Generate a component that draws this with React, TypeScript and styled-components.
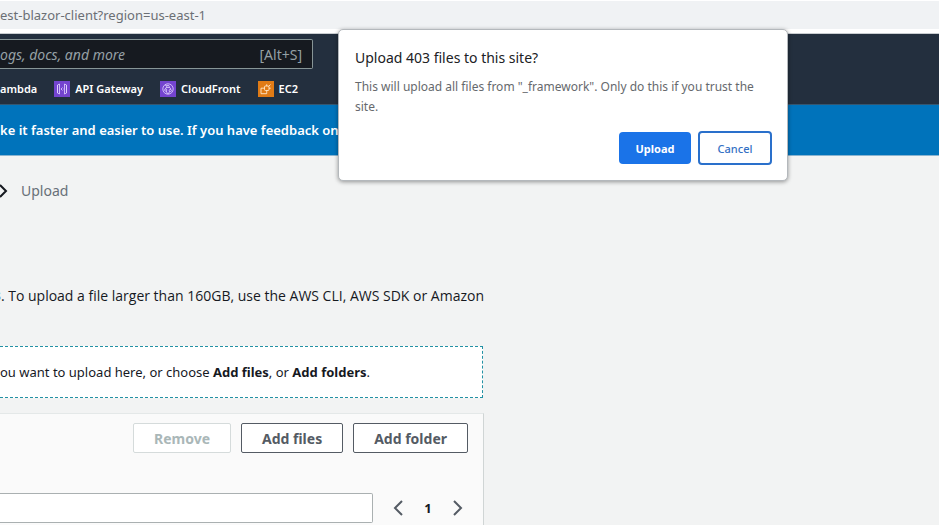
import React from "react";
import styled, { createGlobalStyle } from "styled-components";

const Global = createGlobalStyle`
  *, *::before, *::after { box-sizing: border-box; }
  html, body { margin: 0; }
  body { background: #f2f3f3; font-family: "Noto Sans", "Open Sans", sans-serif; color: #16191f; overflow: hidden; }
  p, h2 { margin: 0; }
  button, input { font-family: inherit; }
`;

const Page = styled.div`
  min-height: 100vh;
  display: flex;
  flex-direction: column;
`;

const AddressBar = styled.div`
  border-top: 1px solid #fff;
  border-bottom: 4px solid #fff;
  background: #f0f2f4;
  color: #6b6f74;
  font-size: 13px;
  line-height: 28px;
  white-space: nowrap;
`;

const Header = styled.header`
  background: #232f3e;
  border-top: 1px solid #c9cdd1;
  padding-top: 5px;
`;

const SearchBox = styled.label`
  display: flex;
  align-items: center;
  width: 313px;
  height: 30px;
  padding-right: 10px;
  background: #161a20;
  border: 1px solid #879596;
  border-left: 0;
  border-radius: 0 2px 2px 0;
  color: #95a0a5;
  font-size: 14px;
`;

const SearchInput = styled.input`
  flex: 1;
  min-width: 0;
  padding: 0;
  border: 0;
  outline: 0;
  background: transparent;
  font-size: 14px;
  font-style: italic;
  &::placeholder { color: #95a0a5; opacity: 1; }
`;

const Favorites = styled.nav`
  display: flex;
  align-items: center;
  gap: 17px;
  height: 35px;
  padding-top: 4px;
  white-space: nowrap;
`;

const Favorite = styled.a`
  display: flex;
  align-items: center;
  gap: 5px;
  color: #fff;
  font-size: 11px;
  font-weight: 600;
  text-decoration: none;
  svg { display: block; flex: none; }
`;

const Notice = styled.div`
  background: #0073bb;
  border-top: 1px solid #35566f;
  border-bottom: 1px solid #8ab4d0;
  color: #fff;
  font-size: 13px;
  font-weight: 600;
  line-height: 50px;
  white-space: nowrap;
`;

const Breadcrumb = styled.nav`
  display: flex;
  align-items: center;
  gap: 12px;
  padding-top: 24px;
  line-height: 22px;
  font-size: 14px;
  color: #687078;
  svg { display: block; }
`;

const Main = styled.main`
  width: 484px;
  max-width: 100%;
  flex: 1;
  display: flex;
  flex-direction: column;
`;

const Intro = styled.p`
  display: flex;
  justify-content: flex-end;
  padding-top: 83px;
  font-family: "Open Sans", sans-serif;
  font-size: 14px;
  line-height: 22px;
  white-space: nowrap;
`;

const DropZone = styled.div`
  margin: 39px 1px 0 0;
  background: #fff;
  border: 1px dashed #2391a4;
  border-left: 0;
  font-size: 13px;
  line-height: 50px;
  white-space: nowrap;
`;

const Panel = styled.section`
  margin-top: 15px;
  padding: 9px 15px 2px 0;
  background: #fafafa;
  border-top: 1px solid #e4e8e8;
  border-right: 1px solid #d0d5d5;
  flex: 1;
`;

const Actions = styled.div`
  display: flex;
  justify-content: flex-end;
  gap: 10px;
`;

const ActionButton = styled.button`
  height: 30px;
  padding: 0 20px;
  background: #fff;
  border: 1px solid #545b64;
  border-radius: 2px;
  color: #545b64;
  font-size: 14px;
  font-weight: 700;
  white-space: nowrap;
  &:disabled { color: #aab7b8; border-color: #d5dbdb; }
`;

const FindRow = styled.div`
  display: flex;
  align-items: center;
  gap: 20px;
  margin-top: 40px;
`;

const FindInput = styled.input`
  flex: 1;
  min-width: 0;
  height: 30px;
  background: #fff;
  border: 1px solid #aab0b1;
  border-left: 0;
  border-radius: 0 2px 2px 0;
  outline: 0;
`;

const Pager = styled.div`
  display: flex;
  align-items: center;
  justify-content: space-between;
  width: 75px;
  padding-right: 5px;
  font-size: 13px;
  font-weight: 700;
`;

const PagerButton = styled.button`
  padding: 0;
  border: 0;
  background: none;
  svg { display: block; }
`;

const Dialog = styled.div`
  position: absolute;
  top: 29px;
  left: 338px;
  width: 450px;
  padding: 16px 15px 15px 16px;
  background: #fff;
  border: 1px solid #b4b8bc;
  border-radius: 5px;
  box-shadow: 0 1px 4px rgba(0, 0, 0, 0.4);
`;

const DialogTitle = styled.h2`
  color: #202124;
  font-size: 14px;
  font-weight: 400;
  line-height: 24px;
`;

const DialogText = styled.p`
  margin-top: 7px;
  color: #66696d;
  font-size: 12px;
  line-height: 20px;
`;

const DialogActions = styled.div`
  display: flex;
  justify-content: flex-end;
  align-items: center;
  gap: 7px;
  margin-top: 14px;
`;

const DialogButton = styled.button<{ $primary?: boolean }>`
  width: ${(p) => (p.$primary ? 72 : 74)}px;
  height: ${(p) => (p.$primary ? 32 : 34)}px;
  padding: 0;
  border: ${(p) => (p.$primary ? "0" : "2px solid #2a70cb")};
  border-radius: 4px;
  background: ${(p) => (p.$primary ? "#1a73e8" : "#fff")};
  color: ${(p) => (p.$primary ? "#fff" : "#3470c4")};
  font-size: 11px;
  font-weight: ${(p) => (p.$primary ? 700 : 500)};
`;

const ApiIcon = () => (
  <svg width="16" height="16" viewBox="0 0 16 16" fill="none" stroke="#e3d5ff" strokeWidth="0.8">
    <rect width="16" height="16" fill="#7444cf" stroke="none" />
    <path d="M3.500 4 5.500 3v10l-2-1zM12.500 4 10.500 3v10l2-1zM3.500 4v8M12.500 4v8M8.500 6.500 7 8l1.500 1.500M9.200 8h.6" />
  </svg>
);

const CloudFrontIcon = () => (
  <svg width="16" height="16" viewBox="0 0 16 16" fill="none" stroke="#e3d5ff" strokeWidth="0.8">
    <rect width="16" height="16" fill="#7444cf" stroke="none" />
    <circle cx="8" cy="8" r="5.200" />
    <circle cx="8" cy="5.500" r="1.200" />
    <circle cx="5.700" cy="9" r="1.100" />
    <circle cx="10.300" cy="9.500" r="1.100" />
    <path d="M7 6.200Q5.500 6.500 5.500 7.900M9 6.200Q11 7 10.500 8.400M6.300 10 7.500 13M5 4l2 1M9.500 10.300 8.500 13" />
  </svg>
);

const Ec2Icon = () => (
  <svg width="16" height="16" viewBox="0 0 16 16" fill="none" stroke="#ffe9cc" strokeWidth="0.9">
    <rect width="16" height="16" fill="#e07b16" stroke="none" />
    <rect x="6.500" y="5" width="4.500" height="4.500" rx="1" />
    <path d="M8.700 3.300V5M11 7.200h1.700M8.700 9.500v1.700M6.500 7.200H3v5.500h5.700v-1.500M10.700 5.300 12.500 3.500" />
  </svg>
);

const Chevron = ({ right }: { right?: boolean }) => (
  <svg width="10" height="16" viewBox="0 0 10 16" fill="none" stroke="#545b64" strokeWidth="2">
    <path d={right ? "M1 1l7 7-7 7" : "M9 1L2 8l7 7"} />
  </svg>
);

export default function App() {
  return (
    <Page>
      <Global />
      <AddressBar>est-blazor-client?region=us-east-1</AddressBar>
      <Header>
        <SearchBox>
          <SearchInput type="search" aria-label="Search" placeholder="ogs, docs, and more" />
          [Alt+S]
        </SearchBox>
        <Favorites aria-label="Favorites">
          <Favorite href="#lambda">ambda</Favorite>
          <Favorite href="#api"><ApiIcon />API Gateway</Favorite>
          <Favorite href="#cloudfront"><CloudFrontIcon />CloudFront</Favorite>
          <Favorite href="#ec2"><Ec2Icon />EC2</Favorite>
        </Favorites>
      </Header>
      <Notice>ke it faster and easier to use. If you have feedback on</Notice>
      <Breadcrumb aria-label="Breadcrumb">
        <svg width="9" height="14" viewBox="0 0 9 14" fill="none" stroke="#16191f" strokeWidth="2">
          <path d="M0 1l6 6-6 6" />
        </svg>
        Upload
      </Breadcrumb>
      <Main>
        <Intro>3. To upload a file larger than 160GB, use the AWS CLI, AWS SDK or Amazon</Intro>
        <DropZone>
          ou want to upload here, or choose <b>Add files</b>, or <b>Add folders</b>.
        </DropZone>
        <Panel>
          <Actions>
            <ActionButton disabled>Remove</ActionButton>
            <ActionButton>Add files</ActionButton>
            <ActionButton>Add folder</ActionButton>
          </Actions>
          <FindRow>
            <FindInput type="text" aria-label="Find by name" />
            <Pager>
              <PagerButton aria-label="Previous page"><Chevron /></PagerButton>
              <span>1</span>
              <PagerButton aria-label="Next page"><Chevron right /></PagerButton>
            </Pager>
          </FindRow>
        </Panel>
      </Main>
      <Dialog role="dialog" aria-labelledby="dialog-title">
        <DialogTitle id="dialog-title">Upload 403 files to this site?</DialogTitle>
        <DialogText>
          This will upload all files from "_framework". Only do this if you trust the site.
        </DialogText>
        <DialogActions>
          <DialogButton $primary>Upload</DialogButton>
          <DialogButton>Cancel</DialogButton>
        </DialogActions>
      </Dialog>
    </Page>
  );
}
